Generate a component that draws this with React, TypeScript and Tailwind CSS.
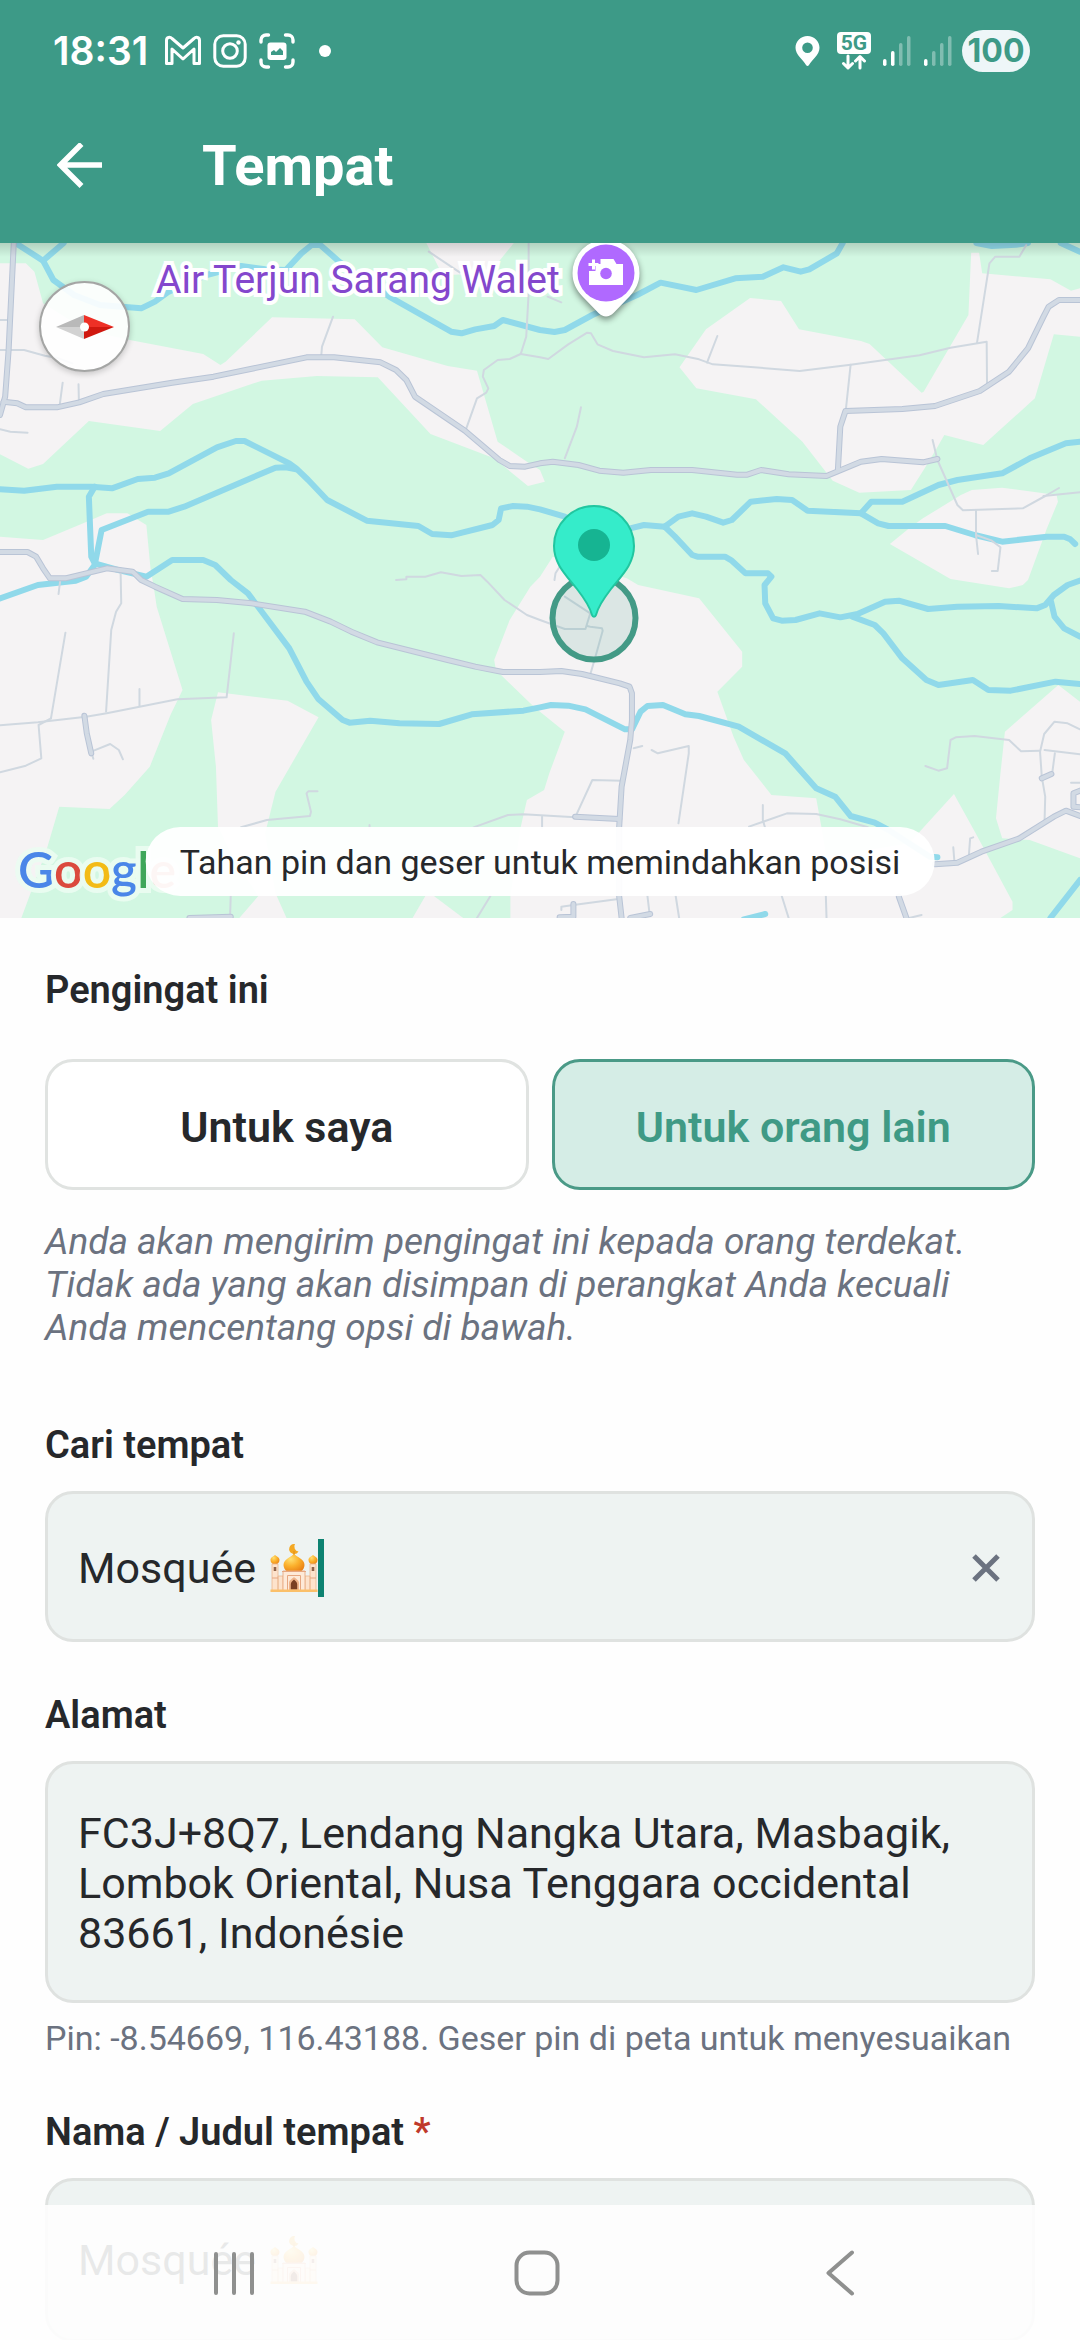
import { useState } from "react";
import type { ReactNode } from "react";

/* ---------- map data (map drawing units: 3136 x 2025, origin at y = 9) ---------- */

const land = [
  "0,70 75,70 100,95 125,190 250,270 377,300 590,342 640,375 655,365 790,232 1030,238 1110,322 1300,378 1385,392 1445,605 1530,665 1568,690 1582,725 1533,738 1435,655 1250,582 1097,412 920,408 760,422 560,492 465,573 258,543 125,672 82,686 0,643",
  "1238,9 1492,9 1440,75 1420,100 1300,105 1275,85",
  "1973,382 2050,268 2178,174 2268,183 2320,268 2500,303 2525,312 2676,458 2682,455 2812,225 2820,38 2843,38 2852,100 3050,118 3110,152 3136,145 3136,290 3060,283 3005,475 2855,615 2742,585 2720,625 2685,685 2645,750 2495,758 2418,722 2330,605 2195,478 2022,445",
  "2584,912 2640,865 2680,835 2790,765 2822,750 2910,743 3068,765 3072,785 3040,865 2985,1020 2970,1035 2930,1045 2760,1017",
  "0,890 125,900 245,848 310,820 370,820 425,855 437,985 447,1045 455,1100 530,1350 495,1425 435,1580 362,1665 318,1707 172,1700 135,1830 62,2034 0,2034",
  "633,1357 835,1382 925,1432 800,1655 770,1780 800,1960 832,2034 695,2034 750,1968 680,1860 633,1760 627,1580 613,1440",
  "1235,1968 1260,1968 1345,2034 1198,2034",
  "1605,950 1820,1015 1853,1035 2030,1075 2155,1235 2155,1280 2083,1355 2130,1490 2160,1560 2240,1665 2370,1675 2385,1760 2400,1850 2640,1810 2770,1662 2833,1780 2940,1985 2940,2010 2905,2034 1482,2034 1482,1968 1510,1770 1530,1680 1580,1650 1595,1600 1640,1475 1568,1415 1545,1395 1440,1290 1435,1260 1480,1140 1540,1040 1568,1010",
  "2918,1475 3073,1335 3136,1385 3136,1855 2990,1800 2910,1795 2892,1735 2905,1600",
];

const water = [
  "45,9 125,62 155,120 215,165 290,195 410,205 450,185 490,155 600,105 700,78 770,88 830,90 875,40 905,15 930,15 985,65 1130,170 1310,275 1340,280 1380,268 1435,258 1460,240 1568,270 1610,276 1640,270 1720,225 1850,165 1918,128 2022,150 2135,115 2215,110 2275,82 2325,95 2350,88 2430,40 2447,9",
  "185,9 125,62",
  "2835,9 2880,18 2950,14 2985,9",
  "3080,9 3136,35",
  "0,748 70,752 165,740 265,740 325,745 400,717 450,713 490,700 630,622 685,603 710,603 840,670 860,685 895,720 950,780 1065,842 1215,858 1255,882 1310,886 1430,855 1448,840 1455,805 1490,798 1530,800 1568,808 1640,830 1740,880 1830,865 1870,855 1930,860",
  "860,688 830,682 800,683 535,800 490,815 430,815 295,870 275,975 250,1010 220,1022 110,1035 0,1075",
  "275,740 258,770 265,950 275,970 350,992 425,1010 500,960 590,960 625,975 670,1020 720,1060 840,1225 890,1325 925,1378 995,1440 1015,1448 1075,1442 1160,1450 1275,1452 1370,1423 1520,1412 1568,1402 1600,1395 1650,1397 1700,1408 1815,1468 1835,1468 1860,1415 1880,1398 1925,1395 1990,1423 2030,1428 2145,1460 2280,1540 2370,1645 2425,1670 2470,1728 2540,1748 2580,1770 2700,1850 2722,1852",
  "1930,860 1970,830 2010,820 2050,830 2100,848 2125,840 2180,785 2255,777 2300,780 2345,812 2500,820 2530,785 2620,785 2725,735 2780,720 2910,700 2990,655 3095,610 3136,605",
  "2500,820 2550,850 2580,858 2745,858 2830,885 2910,905 3040,890 3090,890 3108,898 3122,912",
  "1930,860 1960,890 2010,945 2025,950 2105,950 2125,962 2165,1000 2230,1000 2240,1010 2220,1035 2222,1090 2245,1135 2270,1142 2310,1140 2380,1120 2440,1132 2490,1122 2570,1085 2610,1082 2695,1107 2780,1100 2900,1098 3010,1105 3035,1095 3060,1065 3100,1035 3136,1022",
  "2475,1130 2540,1155 2565,1180 2620,1255 2690,1320 2725,1335 2825,1320 2870,1350 2935,1352 3065,1325 3136,1332",
  "3052,1085 3062,1130 3090,1165 3136,1190",
  "3050,2034 3136,1920",
  "2160,2038 2222,2022",
];

const roads = [
  "40,9 25,330 15,470 0,525",
  "10,485 50,490 75,502 165,502 230,487 300,462 500,428 620,410 890,352 970,352 1105,367 1150,390 1180,420 1205,470 1350,572 1450,660 1480,678 1525,680 1568,670 1605,665 1680,675 1740,692 1810,698 1890,690 2010,690 2140,704 2170,704 2210,690 2290,703 2400,708 2430,695 2500,665 2560,657 2680,667 2722,657",
  "2433,690 2440,560 2455,513 2620,507 2715,498 2845,453 2930,395 2985,325 3030,230 3045,200 3075,180 3136,180",
  "0,936 80,936 105,950 125,985 145,1015 190,1015 310,985 385,995 410,1020 450,1040 530,1077 630,1080 730,1090 885,1115 960,1145 1020,1175 1095,1207 1300,1260 1380,1280 1460,1296 1568,1296 1630,1293 1690,1302 1800,1330 1828,1340 1835,1360 1835,1440 1830,1500 1805,1640 1798,1760 1798,1970 1805,2034",
  "245,1427 252,1480 265,1540",
  "1670,1730 1798,1737",
  "2715,1873 2780,1868 2850,1835 2960,1795 3060,1730 3095,1712 3136,1728",
  "2610,1970 2632,2034",
  "3136,1702 3117,1700 3117,1660 3136,1652",
  "3025,1615 3053,1602",
  "1665,1992 1665,2030 1625,2032",
  "1830,2034 1888,2022",
  "550,2034 670,2030",
];

const lanes = [
  "0,240 20,240", "0,330 70,330 130,347 170,355 210,370", "182,428 174,490", "228,433 229,480",
  "967,230 935,320 933,345", "0,568 30,575 80,578", "1245,35 1335,97",
  "1535,9 1535,160 1528,290 1512,342 1480,357 1445,360 1405,390 1402,410 1418,445 1412,458 1385,475 1353,568",
  "1512,342 1568,352 1592,357 1650,313 1705,278 1716,280 1735,313 1780,333 1870,352 1960,343 2030,358 2070,373 2180,381 2322,393 2470,374 2570,360 2670,346 2760,323 2865,305 2866,430",
  "2083,288 2053,368", "2470,374 2456,510", "1687,502 1675,560 1640,655",
  "2837,308 2873,70 2890,50 2960,50 2980,15", "1590,170 1630,187",
  "2708,600 2722,660 2780,795 2796,811 2970,805 3035,768 3075,744", "3030,768 3136,757",
  "2834,812 2834,885 2840,942", "2834,885 2880,902 2905,922 2897,993 2880,993",
  "1150,1020 1180,1018 1180,1010 1235,1010 1280,997 1340,1008 1395,1005 1415,1025 1465,1080 1530,1125 1568,1140 1640,1167 1700,1167 1714,1120",
  "1610,1020 1613,1000 1625,980", "1640,1070 1714,1120",
  "350,985 352,1090 337,1115 323,1170 308,1415", "175,1020 170,1062", "190,1178 148,1435",
  "0,1456 110,1447 250,1430 310,1420 515,1378 658,1372 679,1180", "405,1347 405,1398",
  "148,1435 112,1455 120,1555 75,1577 0,1597", "265,1535 320,1512 345,1530 357,1558", "265,1535 271,1556",
  "700,1762 775,1740 900,1728 903,1715 890,1660 895,1654 922,1654", "1073,1755 1073,1765",
  "1375,1762 1475,1725 1520,1723 1670,1732 1720,1620 1805,1622", "1574,1730 1574,1765",
  "670,1968 668,2030", "1424,1968 1385,2034",
  "1705,1158 1714,1160 1748,1165 1750,1172 1733,1235 1715,1300",
  "1840,1525 1865,1518", "1892,1530 1910,1540 2000,1518 2000,1540 1970,1750",
  "2215,1695 2215,1740 2222,1765", "2175,1760 2285,1720 2370,1722 2440,1738 2520,1762",
  "2687,1578 2725,1592 2750,1585 2760,1500 2775,1492 2830,1488 2930,1500 2965,1534 3018,1532",
  "3136,1468 3100,1450 3062,1445 3032,1482 3020,1535 3025,1610 3035,1670 3033,1745",
  "3033,1530 3136,1543", "3063,1540 3055,1602", "3110,1628 3136,1628",
  "2768,1822 2771,1860", "2826,1792 2817,1795 2813,1850",
  "1630,2010 1630,2000 1665,1995 1790,1978", "1880,1968 1886,2020", "1962,1968 1972,2034",
  "2270,1968 2290,2034", "2398,1968 2400,2034", "2640,2034 2676,2025",
];

function Lines({ points, color, width }: { points: string[]; color: string; width: number }) {
  return (
    <g fill="none" stroke={color} strokeWidth={width} strokeLinejoin="round" strokeLinecap="round">
      {points.map((p) => (
        <polyline key={p} points={p} vectorEffect="non-scaling-stroke" />
      ))}
    </g>
  );
}

function MapTiles() {
  return (
    <svg className="block h-full w-full" viewBox="0 9 3136 2025" preserveAspectRatio="none" aria-hidden="true">
      <rect x="0" y="0" width="3136" height="2040" fill="#d2f7e2" />
      <g fill="#f5f3f4">
        {land.map((p) => (
          <polygon key={p} points={p} />
        ))}
      </g>
      <Lines points={water} color="#90d9ea" width={6} />
      <Lines points={lanes} color="#d0d8e0" width={2} />
      <Lines points={roads} color="#b9c4d6" width={6} />
      <Lines points={roads} color="#d2dae4" width={4} />
    </svg>
  );
}

function Compass() {
  return (
    <button type="button" aria-label="Kompas" className="absolute top-[38px] left-[39px] flex size-[91px] items-center justify-center rounded-full border-2 border-[#a4a5a4] bg-white/90 shadow-[0_2px_6px_rgba(0,0,0,0.2)]">
      <svg width="58" height="24" viewBox="0 0 58 24" aria-hidden="true">
        <path d="M0 12 28 0V12Z" fill="#b9b9b9" />
        <path d="M0 12 28 24V12Z" fill="#d2d2d2" />
        <path d="M28 0 58 12H28Z" fill="#ee3026" />
        <path d="M28 24 58 12H28Z" fill="#d0180f" />
        <circle cx="28.500" cy="12" r="4.500" fill="#fff" />
      </svg>
    </button>
  );
}

function PlacePin() {
  return (
    <svg className="absolute -top-[6px] left-[570px] drop-shadow-[0_3px_3px_rgba(0,0,0,0.45)]" width="72" height="84" viewBox="0 0 72 84" aria-hidden="true">
      <path d="M36 2.500A33.500 33.500 0 0 0 2.500 36c0 10 4 17 10 23.500l16 16.500c4.500 4.500 10.500 4.500 15 0l16-16.500c6-6.500 10-13.500 10-23.500A33.500 33.500 0 0 0 36 2.500Z" fill="#fff" />
      <circle cx="36" cy="36" r="28.500" fill="#b069ff" />
      <path d="M19 34h6.500v-7H30.500V22h13l3 5H53v21H19Z" fill="#fff" />
      <path d="M22 22.500h3V26h3.500v3H25v3.500h-3V29h-3.500v-3H22Z" fill="#fff" />
      <circle cx="36" cy="36.500" r="5.800" fill="#b069ff" />
    </svg>
  );
}

function DropPin() {
  return (
    <svg className="absolute top-[258px] left-[548px]" width="92" height="166" viewBox="0 0 92 166" aria-hidden="true">
      <circle cx="46" cy="117" r="41.500" fill="#3d9a87" fillOpacity="0.140" stroke="#439a86" strokeWidth="6" />
      <path d="M46 5A40 40 0 0 0 6 45c0 18 12 29 23 43 7 9 13 18 15 26 .6 2.200 3.400 2.200 4 0 2-8 8-17 15-26 11-14 23-25 23-43A40 40 0 0 0 46 5Z" fill="#35ecca" stroke="#21c6a0" strokeWidth="2" />
      <circle cx="46" cy="44" r="16" fill="#16b492" />
    </svg>
  );
}

function GoogleMark() {
  return (
    <p className="absolute bottom-[17px] left-[18px] font-['Lato',sans-serif] text-[50px] leading-[64px] font-semibold [-webkit-text-stroke:10px_rgba(235,252,242,0.9)] [paint-order:stroke]">
      <span className="text-[#4a86e8]">G</span>
      <span className="text-[#db4a3e]">o</span>
      <span className="text-[#f3bb16]">o</span>
      <span className="text-[#4a86e8]">g</span>
      <span className="text-[#3fa65a]">l</span>
      <span className="text-[#db4a3e]">e</span>
    </p>
  );
}

function MapView() {
  return (
    <section aria-label="Peta" className="relative h-[675px] shrink-0 overflow-hidden bg-[#d2f7e2]">
      <MapTiles />
      <div className="absolute inset-x-0 top-0 h-[14px] bg-linear-to-b from-black/15 to-transparent" />
      <p className="absolute top-[14px] left-[156px] text-[39px] leading-[46px] whitespace-nowrap text-[#8447cd] [-webkit-text-stroke:8px_white] [paint-order:stroke]">
        Air Terjun Sarang Walet
      </p>
      <PlacePin />
      <Compass />
      <DropPin />
      <GoogleMark />
      <p className="absolute bottom-[22px] left-1/2 flex h-[69px] -translate-x-1/2 items-center rounded-full bg-white/95 px-[34px] text-[34px] leading-[40px] whitespace-nowrap text-[#26282b]">
        Tahan pin dan geser untuk memindahkan posisi
      </p>
    </section>
  );
}

/* ---------- status bar ---------- */

function Signal({ level }: { level: number }) {
  const tops = [24, 16, 8, 1];
  return (
    <svg width="28" height="32" viewBox="0 0 28 32" aria-hidden="true">
      {tops.map((y, i) => (
        <rect key={y} x={i * 8} y={y} width="3.500" height={31 - y} rx="1.700" fill="#fff" fillOpacity={i < level ? 1 : 0.350} />
      ))}
    </svg>
  );
}

function StatusBar() {
  return (
    <div className="flex h-[88px] items-center justify-between pt-[14px] pr-[50px] pl-[53px] font-['Inter',sans-serif]">
      <div className="flex items-center">
        <time className="text-[39px] leading-[48px] font-semibold">18:31</time>
        <svg className="ml-[16px]" width="38" height="32" viewBox="0 0 38 32" fill="none" stroke="#fff" strokeWidth="3" strokeLinejoin="round" aria-hidden="true">
          <path d="M2.500 5.500C2.500 2 6 1.500 8 3.500L19 13 30 3.500C32 1.500 35.500 2 35.500 5.500V28.500H30V14L19 24 8 14V28.500H2.500Z" />
        </svg>
        <svg className="ml-[11px]" width="34" height="34" viewBox="0 0 34 34" fill="none" stroke="#fff" strokeWidth="3" aria-hidden="true">
          <rect x="1.800" y="1.800" width="30.400" height="30.400" rx="8.500" />
          <circle cx="17" cy="17" r="7.300" />
          <circle cx="25.500" cy="8.500" r="2.200" fill="#fff" stroke="none" />
        </svg>
        <svg className="ml-[12px]" width="36" height="36" viewBox="0 0 36 36" fill="none" stroke="#fff" strokeWidth="3.400" strokeLinecap="round" aria-hidden="true">
          <path d="M2 9V7a5 5 0 0 1 5-5h2.500M26.500 2H29a5 5 0 0 1 5 5v2M34 27v2a5 5 0 0 1-5 5h-2.500M9.500 34H7a5 5 0 0 1-5-5v-2" />
          <rect x="8.500" y="9.500" width="19" height="17.500" rx="3" fill="#fff" stroke="none" />
          <path d="M12 22v-3l3-2 2 2 4-4 3 3v4Z" fill="#3d9a87" stroke="none" />
        </svg>
        <span className="ml-[24px] size-[12px] rounded-full bg-white" />
      </div>
      <div className="flex items-center">
        <svg width="25" height="32" viewBox="0 0 25 32" aria-hidden="true">
          <path fillRule="evenodd" d="M12.500 1C5.800 1 .5 6.200.5 12.800c0 7.200 7.500 12 10.500 17.200q1.500 2 3 0C17 24.800 24.500 20 24.500 12.800 24.500 6.200 19.200 1 12.500 1Zm0 6.500a5.300 5.300 0 1 1 0 10.600 5.300 5.300 0 0 1 0-10.600Z" fill="#fff" />
        </svg>
        <div className="ml-[17px] flex w-[34px] flex-col items-center">
          <span className="flex h-[22px] w-full items-center justify-center rounded-[4px] bg-white font-['Roboto',sans-serif] text-[21px] leading-[22px] font-bold text-[#3d9a87]">5G</span>
          <svg width="26" height="16" viewBox="0 0 26 16" fill="none" stroke="#fff" strokeWidth="3" strokeLinecap="round" strokeLinejoin="round" aria-hidden="true">
            <path d="M7 2v12M2.500 9.500 7 14l4.500-4.500M19 14V3M14.500 7 19 2.500 23.500 7" />
          </svg>
        </div>
        <div className="ml-[12px] flex gap-[13px]">
          <Signal level={2} />
          <Signal level={1} />
        </div>
        <span className="ml-[10px] flex h-[42px] w-[68px] items-center justify-center rounded-full bg-[#eef6f8] text-[32px] leading-[40px] font-bold text-[#3d9a87]">100</span>
      </div>
    </div>
  );
}

/* ---------- form ---------- */

function Mosque() {
  return (
    <svg className="shrink-0" width="48" height="50" viewBox="0 0 48 50" role="img" aria-label="🕌">
      <defs>
        <radialGradient id="dome" cx="0.350" cy="0.300" r="0.800">
          <stop offset="0" stopColor="#ffe071" />
          <stop offset="0.500" stopColor="#fbb02c" />
          <stop offset="1" stopColor="#e97f14" />
        </radialGradient>
      </defs>
      <path d="M25 1a5 5 0 1 0 3.500 7.500A5 5 0 0 1 25 1Z" fill="#f4a823" />
      <path d="M24 8v5" stroke="#e8961c" strokeWidth="1.500" />
      <path d="M24 11c3 3 10.500 5 10.500 11 0 2.500-1.500 5-3.500 6.500H17c-2-1.500-3.500-4-3.500-6.500 0-6 7.500-8 10.500-11Z" fill="url(#dome)" />
      <g fill="url(#dome)">
        <path d="M5 12c1.500 1.500 4.500 2 4.500 5a4.500 4.500 0 0 1-9 0c0-3 3-3.500 4.500-5Z" />
        <path d="M43 12c1.500 1.500 4.500 2 4.500 5a4.500 4.500 0 0 1-9 0c0-3 3-3.500 4.500-5Z" />
      </g>
      <path d="M2 21h6v27H2ZM40 21h6v27h-6ZM8 33h5v15H8ZM35 33h5v15h-5Z" fill="#fde3cc" stroke="#eab691" strokeWidth="0.800" />
      <path d="M13 28h22v20H13Z" fill="#feead8" stroke="#e9ac85" strokeWidth="0.900" />
      <path d="M17.500 48V32.500h13V48M2 35h6M40 35h6M12 28.500h24" stroke="#e6a781" strokeWidth="1" fill="none" />
      <path d="M19 48V40c0-3 3-4 5-6 2 2 5 3 5 6v8Z" fill="#efb48b" />
      <path d="M20.800 46.500V41c0-2 2-3 3.200-4.500C25.200 38 27.200 39 27.200 41v5.500Z" fill="#7a3f22" />
      <path d="M3.700 24h2.600v4H3.700ZM41.700 24h2.600v4h-2.600Z" fill="#8f6248" />
      <path d="M.5 46.500h47V49H.5Z" fill="#fbc06a" />
    </svg>
  );
}

function Label({ htmlFor, children }: { htmlFor: string; children: ReactNode }) {
  return (
    <label htmlFor={htmlFor} className="block text-[38px] leading-[42px] font-semibold">
      {children}
    </label>
  );
}

function ReceiverChoice() {
  const [receiver, setReceiver] = useState("other");
  const base = "h-[131px] rounded-[28px] border-[3px] pt-[4px] text-[43px] leading-[50px] font-semibold";
  const on = "border-[#4a9a87] bg-[#d5ede6] text-[#3f9a85]";
  const off = "border-[#e0e3e1] bg-white text-[#26282b]";
  return (
    <div role="group" aria-labelledby="receiver-label" className="mt-[48px] grid grid-cols-2 gap-[23px]">
      <button type="button" aria-pressed={receiver === "me"} onClick={() => setReceiver("me")} className={`${base} ${receiver === "me" ? on : off}`}>
        Untuk saya
      </button>
      <button type="button" aria-pressed={receiver === "other"} onClick={() => setReceiver("other")} className={`${base} ${receiver === "other" ? on : off}`}>
        Untuk orang lain
      </button>
    </div>
  );
}

export default function App() {
  return (
    <div className="relative flex h-screen flex-col overflow-hidden bg-[#fefefe] font-['Roboto',sans-serif] text-[#26282b]">
      <header className="shrink-0 bg-[#3d9a87] text-white">
        <StatusBar />
        <div className="flex h-[155px] items-center pl-[57px]">
          <button type="button" aria-label="Kembali">
            <svg width="46" height="46" viewBox="0 0 46 46" fill="none" stroke="#fff" strokeWidth="5.500" aria-hidden="true">
              <path d="M24.500 1 3.500 22l21 21M3.500 22H45" />
            </svg>
          </button>
          <h1 className="ml-[99px] text-[56px] leading-[64px] font-bold">Tempat</h1>
        </div>
      </header>

      <main className="flex min-h-0 flex-1 flex-col overflow-y-auto [scrollbar-width:none]">
        <MapView />

        <form className="px-[45px] pt-[51px] pb-[140px]" onSubmit={(e) => e.preventDefault()}>
          <h2 id="receiver-label" className="text-[38px] leading-[42px] font-semibold">Pengingat ini</h2>
          <ReceiverChoice />
          <p className="mt-[30px] text-[37px] leading-[43px] text-[#6b7280] italic">
            Anda akan mengirim pengingat ini kepada orang terdekat. Tidak ada yang akan disimpan di perangkat Anda kecuali Anda mencentang opsi di bawah.
          </p>

          <div className="mt-[75px]">
            <Label htmlFor="search">Cari tempat</Label>
            <div className="mt-[25px] flex h-[151px] items-center rounded-[28px] border-[3px] border-[#dfe2e0] bg-[#eef3f2] px-[30px] pt-[2px]">
              <input id="search" type="text" defaultValue="Mosquée" className="mr-[14px] field-sizing-content bg-transparent text-[43px] leading-[50px] outline-none" />
              <Mosque />
              <span className="h-[58px] w-[6px] shrink-0 bg-[#0d8271]" />
              <button type="button" aria-label="Hapus" className="ml-auto">
                <svg width="32" height="32" viewBox="0 0 32 32" fill="none" stroke="#6b7280" strokeWidth="5" aria-hidden="true">
                  <path d="M4 4 28 28M28 4 4 28" />
                </svg>
              </button>
            </div>
          </div>

          <div className="mt-[52px]">
            <Label htmlFor="address">Alamat</Label>
            <textarea
              id="address"
              rows={3}
              defaultValue="FC3J+8Q7, Lendang Nangka Utara, Masbagik, Lombok Oriental, Nusa Tenggara occidental 83661, Indonésie"
              className="mt-[25px] block w-full resize-none overflow-hidden rounded-[28px] border-[3px] border-[#dfe2e0] bg-[#eef3f2] px-[30px] pt-[44px] pb-[42px] text-[43px] leading-[50px] outline-none"
            />
            <p className="mt-[15px] text-[34px] leading-[40px] whitespace-nowrap text-[#6b7280]">
              Pin: -8.54669, 116.43188. Geser pin di peta untuk menyesuaikan
            </p>
          </div>

          <div className="mt-[53px]">
            <Label htmlFor="title">
              Nama / Judul tempat <span className="text-[#c0392b]">*</span>
            </Label>
            <div className="mt-[25px] flex h-[164px] items-center rounded-[28px] border-[3px] border-[#dfe2e0] bg-[#eef3f2] px-[30px]">
              <input id="title" type="text" defaultValue="Mosquée" className="mr-[14px] field-sizing-content bg-transparent text-[43px] leading-[50px] outline-none" />
              <Mosque />
            </div>
          </div>
        </form>
      </main>

      <nav aria-label="Navigasi sistem" className="absolute inset-x-0 bottom-0 flex h-[135px] items-center justify-between bg-[#fefefe]/90 pr-[218px] pl-[211px]">
        <button type="button" aria-label="Aplikasi terbaru">
          <svg width="46" height="46" viewBox="0 0 46 46" stroke="#8f908f" strokeWidth="4" strokeLinecap="round" aria-hidden="true">
            <path d="M5 4v39M23 4v39M41 4v39" />
          </svg>
        </button>
        <button type="button" aria-label="Beranda">
          <svg width="46" height="46" viewBox="0 0 46 46" fill="none" stroke="#8f908f" strokeWidth="4" aria-hidden="true">
            <rect x="2.500" y="2.500" width="41" height="41" rx="13" />
          </svg>
        </button>
        <button type="button" aria-label="Kembali ke layar sebelumnya">
          <svg width="46" height="46" viewBox="0 0 46 46" fill="none" stroke="#8f908f" strokeWidth="4" strokeLinecap="round" strokeLinejoin="round" aria-hidden="true">
            <path d="M36 2.500 12.500 23 36 43.500" />
          </svg>
        </button>
      </nav>
    </div>
  );
}
